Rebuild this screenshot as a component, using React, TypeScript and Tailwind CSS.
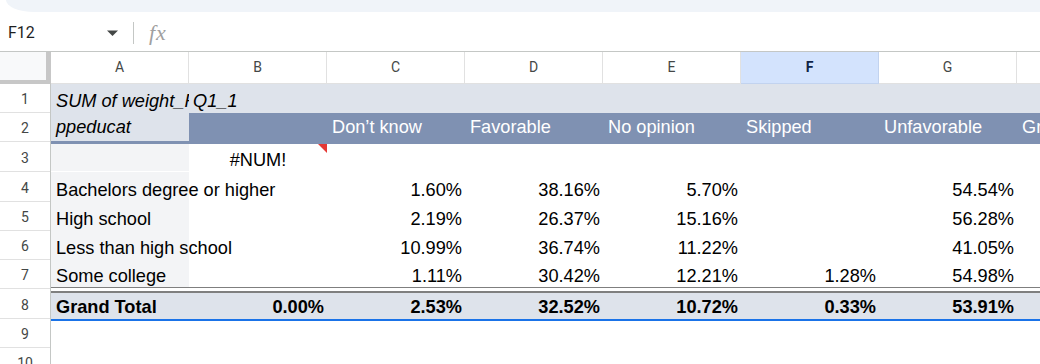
import React from 'react';

const COLS = ['A', 'B', 'C', 'D', 'E', 'F', 'G', 'H'];

const DATA = [
  { label: 'Bachelors degree or higher', vals: ['1.60%', '38.16%', '5.70%', '', '54.54%'], row: 'h-[29px] pb-[0px]' },
  { label: 'High school', vals: ['2.19%', '26.37%', '15.16%', '', '56.28%'], row: 'h-[29px] pb-[0px]' },
  { label: 'Less than high school', vals: ['10.99%', '36.74%', '11.22%', '', '41.05%'], row: 'h-[29px] pb-[0px]' },
  { label: 'Some college', vals: ['1.11%', '30.42%', '12.21%', '1.28%', '54.98%'], row: 'h-[28px] pb-[0px]' },
];

const ROW_HEADERS = [
  { n: '1', h: 'h-[29px]' },
  { n: '2', h: 'h-[29px]' },
  { n: '3', h: 'h-[30px]' },
  { n: '4', h: 'h-[30px]' },
  { n: '5', h: 'h-[29px]' },
  { n: '6', h: 'h-[29px]' },
  { n: '7', h: 'h-[29px]' },
  { n: '8', h: 'h-[30px]' },
  { n: '9', h: 'h-[29px]' },
  { n: '10', h: 'h-[29px]' },
];

function Num({ v, bold }: { v: string; bold?: boolean }) {
  return (
    <div className={`w-[138px] shrink-0 h-full flex items-end justify-end pr-[3px] whitespace-nowrap ${bold ? 'font-bold' : ''}`}>
      {v}
    </div>
  );
}

export default function App() {
  return (
    <div className="w-[1040px] h-[364px] overflow-hidden bg-white font-['Roboto',sans-serif]">
      {/* toolbar bottom edge */}
      <div className="h-[12px] pl-[6px]">
        <div className="h-full bg-[#f0f4f9] rounded-bl-[28px_12px]" />
      </div>

      {/* name box / formula bar */}
      <div className="h-[39px] flex items-center pt-[2px]">
        <div className="w-[125px] shrink-0 flex items-center justify-between pl-[8px] pr-[7px]">
          <span className="text-[16px] leading-none text-[#1f1f1f]">F12</span>
          <svg width="11" height="6" viewBox="0 0 11 6">
            <path d="M0 0.5H11L5.5 6Z" fill="#444746" />
          </svg>
        </div>
        <div className="ml-[8px] w-px h-[22px] bg-[#c4c7c5]" />
        <span className="ml-[15px] font-['Liberation_Serif',serif] italic text-[22px] leading-none text-[#a0a0a0] tracking-[1px]">
          fx
        </span>
      </div>

      {/* column headers */}
      <div className="h-[33px] flex border-t border-[#c4c7c5] text-[14px]">
        <div className="w-[51px] shrink-0 flex flex-col">
          <div className="flex-1 flex">
            <div className="w-[46px] bg-[#f8f9fa]" />
            <div className="w-[5px] bg-[#c7c7c7]" />
          </div>
          <div className="h-[4px] bg-[#c7c7c7]" />
        </div>
        {COLS.map((c) =>
          c === 'F' ? (
            <div
              key={c}
              className="w-[138px] shrink-0 h-full flex items-center justify-center bg-[#d3e3fd] border-r border-b border-[#c2d3ef] font-bold text-[#0e2347]"
            >
              {c}
            </div>
          ) : (
            <div
              key={c}
              className="w-[138px] shrink-0 h-full flex items-center justify-center border-r border-b border-[#e1e1e1] text-[#444746]"
            >
              {c}
            </div>
          )
        )}
      </div>

      {/* body */}
      <div className="flex">
        <div className="w-[51px] shrink-0 border-r border-[#c4c7c5] flex flex-col text-[14px] text-[#444746]">
          {ROW_HEADERS.map((r) => (
            <div key={r.n} className={`${r.h} shrink-0 border-b border-[#e1e1e1] flex items-center justify-center pt-[3px]`}>
              {r.n}
            </div>
          ))}
        </div>

        <div className="flex-1 min-w-0 flex flex-col font-['Liberation_Sans',Arial,sans-serif] text-[18.2px] leading-[21px] text-black">
          {/* row 1 */}
          <div className="h-[29px] shrink-0 flex bg-[#dee3eb] pb-[1px]">
            <div className="w-[138px] shrink-0 h-full flex items-end pl-[5px] overflow-hidden whitespace-nowrap italic">
              SUM of weight_FINAL
            </div>
            <div className="w-[138px] shrink-0 h-full flex items-end pl-[4px] whitespace-nowrap italic">Q1_1</div>
          </div>

          {/* row 2 */}
          <div className="h-[28px] shrink-0 flex bg-[#7f91b2] text-white">
            <div className="w-[138px] shrink-0 h-full flex items-end pl-[5px] pb-[3px] bg-[#dee3eb] text-black italic whitespace-nowrap">
              ppeducat
            </div>
            <div className="w-[138px] shrink-0 h-full" />
            {['Don’t know', 'Favorable', 'No opinion', 'Skipped', 'Unfavorable', 'Grand Total'].map((t) => (
              <div key={t} className="w-[138px] shrink-0 h-full flex items-end pl-[5px] pb-[3px] whitespace-nowrap">
                {t}
              </div>
            ))}
          </div>
          <div className="h-[3px] shrink-0 bg-[#7f91b2]" />

          {/* row 3 */}
          <div className="h-[28px] shrink-0 flex pb-[1px]">
            <div className="w-[138px] shrink-0 h-full bg-[#f3f4f6]" />
            <div className="relative w-[138px] shrink-0 h-full flex items-end justify-center">
              #NUM!
              <svg className="absolute top-0 right-0" width="9" height="9" viewBox="0 0 9 9">
                <path d="M0 0H9V9Z" fill="#e53935" />
              </svg>
            </div>
          </div>

          {/* rows 4-7 */}
          {DATA.map((r) => (
            <div key={r.label} className={`${r.row} shrink-0 flex`}>
              <div className="w-[138px] shrink-0 h-full flex items-end pl-[5px] bg-[#f3f4f6] whitespace-nowrap">
                {r.label}
              </div>
              <div className="w-[138px] shrink-0 h-full" />
              {r.vals.map((v, i) => (
                <Num key={i} v={v} />
              ))}
            </div>
          ))}

          {/* double border */}
          <div className="h-[1px] shrink-0 bg-[#7f7f7f]" />
          <div className="h-[3px] shrink-0 bg-white" />
          <div className="h-[2px] shrink-0 bg-[#7f7f7f]" />

          {/* row 8 */}
          <div className="h-[26px] shrink-0 flex bg-[#dee3eb] pb-[1px]">
            <div className="w-[138px] shrink-0 h-full flex items-end pl-[5px] font-bold whitespace-nowrap">Grand Total</div>
            {['0.00%', '2.53%', '32.52%', '10.72%', '0.33%', '53.91%', '100.00%'].map((v, i) => (
              <Num key={i} v={v} bold />
            ))}
          </div>
          <div className="h-[2px] shrink-0 bg-[#1a73e8]" />
        </div>
      </div>
    </div>
  );
}
